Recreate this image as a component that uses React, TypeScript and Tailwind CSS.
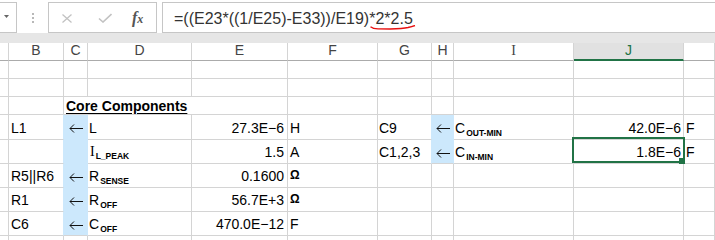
import type { ReactNode } from 'react'
import { twMerge } from 'tailwind-merge'

const COLS = 'grid grid-cols-[9px_55px_24px_104px_96px_90px_54px_22px_120px_110px_1fr]'

type Spec = { v?: ReactNode; cls?: string; wide?: boolean; sel?: boolean }

// filled cells hide their own gridlines
const FILL = 'bg-[#cce8fc] border-r-[#cce8fc] border-b-[#cce8fc]'
const FILL_END = 'bg-[#cce8fc] border-r-[#cce8fc]'
const EDGE = 'border-r-[#cce8fc]'
const NUM = 'justify-end pr-[3px]'
const ARROW = 'items-center justify-center pt-[3px] pb-0'

function Arrow() {
  return (
    <svg width="14" height="9" viewBox="0 0 14 9" fill="none" stroke="#111" strokeWidth="1">
      <path d="M1 4.5h13M5 0.5L1 4.5l4 4" />
    </svg>
  )
}

function Sub({ t, main }: { t: string; main: ReactNode }) {
  return (
    <span>
      {main}
      <sub className="-bottom-[3px] ml-[1px] text-[8.5px] font-bold">{t}</sub>
    </span>
  )
}

const SerifI = () => <span className="font-['Liberation_Serif',serif]">I</span>

function Selection() {
  return (
    <>
      <div className="pointer-events-none absolute -left-[2px] -right-[2px] -top-[3px] bottom-0 z-10 border-2 border-[#217346]" />
      <div className="absolute -bottom-[1px] -right-[2px] z-20 h-[6px] w-[6px] bg-[#217346]" />
    </>
  )
}

function Cell({ s }: { s: Spec }) {
  return (
    <div
      className={twMerge(
        'relative flex items-end whitespace-nowrap border-r border-b border-r-[#d4d4d4] border-b-[#d4d4d4] pb-[3px] text-[14px] leading-[16px] text-black',
        s.wide && 'col-span-3',
        s.cls
      )}
    >
      {s.v}
      {s.sel && <Selection />}
    </div>
  )
}

const empty = (n: number): Spec[] => Array.from({ length: n }, () => ({}))

const ROWS: { h: string; cells: Spec[] }[] = [
  { h: 'h-[18px]', cells: empty(11) },
  { h: 'h-[18px]', cells: empty(11) },
  {
    h: 'h-[18px]',
    cells: [
      {},
      {},
      {
        wide: true,
        cls: 'pl-[2px] pb-0 font-bold underline underline-offset-2',
        v: 'Core Components',
      },
      ...empty(6),
    ],
  },
  {
    h: 'h-[25px]',
    cells: [
      {},
      { v: 'L1', cls: `pl-[2px] ${EDGE}` },
      { v: <Arrow />, cls: `${FILL} ${ARROW}` },
      { v: 'L', cls: 'pl-[1px]' },
      { v: '27.3E−6', cls: NUM },
      { v: 'H', cls: 'pl-[2px]' },
      { v: 'C9', cls: `pl-[1px] ${EDGE}` },
      { v: <Arrow />, cls: `${FILL} ${ARROW}` },
      { v: <Sub main="C" t="OUT-MIN" />, cls: 'pl-[1px]' },
      { v: '42.0E−6', cls: 'justify-end pr-[2px]' },
      { v: 'F', cls: 'pl-[2px]' },
    ],
  },
  {
    h: 'h-[24px]',
    cells: [
      {},
      { cls: EDGE },
      { cls: FILL },
      { v: <Sub main={<SerifI />} t="L_PEAK" />, cls: 'pl-[2px]' },
      { v: '1.5', cls: NUM },
      { v: 'A', cls: 'pl-[2px]' },
      { v: 'C1,2,3', cls: `pl-[1px] ${EDGE}` },
      { v: <Arrow />, cls: `${FILL_END} ${ARROW}` },
      { v: <Sub main="C" t="IN-MIN" />, cls: 'pl-[1px]' },
      { v: '1.8E−6', cls: 'justify-end pr-[2px]', sel: true },
      { v: 'F', cls: 'pl-[2px]' },
    ],
  },
  {
    h: 'h-[24px]',
    cells: [
      {},
      { v: 'R5||R6', cls: `pl-[2px] ${EDGE}` },
      { v: <Arrow />, cls: `${FILL} ${ARROW}` },
      { v: <Sub main="R" t="SENSE" />, cls: 'pl-[1px]' },
      { v: '0.1600', cls: NUM },
      { v: 'Ω', cls: 'pl-[2px] text-[12px] font-bold' },
      ...empty(5),
    ],
  },
  {
    h: 'h-[24px]',
    cells: [
      {},
      { v: 'R1', cls: `pl-[2px] ${EDGE}` },
      { v: <Arrow />, cls: `${FILL} ${ARROW}` },
      { v: <Sub main="R" t="OFF" />, cls: 'pl-[1px]' },
      { v: '56.7E+3', cls: NUM },
      { v: 'Ω', cls: 'pl-[2px] text-[12px] font-bold' },
      ...empty(5),
    ],
  },
  {
    h: 'h-[24px]',
    cells: [
      {},
      { v: 'C6', cls: `pl-[2px] ${EDGE}` },
      { v: <Arrow />, cls: `${FILL_END} ${ARROW}` },
      { v: <Sub main="C" t="OFF" />, cls: 'pl-[1px]' },
      { v: '470.0E−12', cls: NUM },
      { v: 'F', cls: 'pl-[2px]' },
      ...empty(5),
    ],
  },
  { h: 'h-[24px]', cells: empty(11) },
]

const HEAD = ['', 'B', 'C', 'D', 'E', 'F', 'G', 'H', 'I', 'J', '']

function FormulaBar() {
  return (
    <div className="flex h-[33px] items-start bg-white">
      {/* name box (scrolled off) */}
      <div className="mt-[2px] flex h-[31px] w-[17px] items-center justify-center border-y border-r border-[#c6c6c6] pr-[3px] pb-[3px]">
        <svg width="5" height="3" viewBox="0 0 5 3">
          <path d="M0 0h5L2.5 3z" fill="#666" />
        </svg>
      </div>
      <div className="flex w-[31px] justify-center pt-[13px]">
        <svg width="2" height="10" viewBox="0 0 2 10" fill="#b8b8b8">
          <rect x="0" y="0" width="2" height="2" />
          <rect x="0" y="4" width="2" height="2" />
          <rect x="0" y="8" width="2" height="2" />
        </svg>
      </div>
      {/* cancel / enter / fx */}
      <div className="mt-[2px] flex h-[31px] w-[109px] items-center border border-[#c6c6c6] pt-[1px]">
        <svg className="ml-[13px]" width="10" height="9" viewBox="0 0 10 9" stroke="#c2c2c2" strokeWidth="1.3">
          <path d="M0.5 0.5L9.5 8.5M9.5 0.5L0.5 8.5" />
        </svg>
        <svg className="ml-[26px]" width="14" height="10" viewBox="0 0 14 10" fill="none" stroke="#c2c2c2" strokeWidth="1.6">
          <path d="M1 5.5L5 9L13.5 1" />
        </svg>
        <span className="ml-[20px] font-['Liberation_Serif',serif] text-[16px] font-bold italic leading-none text-[#555]">
          f<span className="text-[12px]">x</span>
        </span>
      </div>
      <div className="relative ml-[5px] mt-[2px] flex h-[31px] flex-1 items-center border-y border-l border-[#c6c6c6] pl-[11px] pt-[3px] text-[16px] leading-[20px] text-[#333]">
        =((E23*((1/E25)-E33))/E19)*2*2.5
        <svg className="absolute left-[207px] top-[22px]" width="46" height="6" viewBox="0 0 46 6" fill="none" stroke="#e81010" strokeWidth="1.4">
          <path d="M0.5 1.7Q3 3.7 8 3.9L20 4Q33 3.6 38 2.5Q42 1.5 45 0.5" />
        </svg>
      </div>
    </div>
  )
}

export default function App() {
  return (
    <div className="h-[240px] w-[715px] overflow-hidden bg-white font-['Liberation_Sans',Arial,sans-serif]">
      <FormulaBar />
      <div className="h-[10px] bg-[#e6e6e6]" />

      {/* column headers */}
      <div className={`${COLS} h-[18px]`}>
        {HEAD.map((l, i) => (
          <div
            key={i}
            className={
              l === 'J'
                ? 'flex justify-center border-r border-b-2 border-r-[#d4d4d4] border-b-[#217346] bg-[#e1e1e1] text-[14px] leading-[15px] text-[#217346]'
                : 'flex justify-center border-r border-b border-r-[#d4d4d4] border-b-[#ababab] text-[14px] leading-[15px] text-[#444]'
            }
          >
            {l === 'I' ? <SerifI /> : l}
          </div>
        ))}
      </div>

      {ROWS.map((r, i) => (
        <div key={i} className={`${COLS} ${r.h}`}>
          {r.cells.map((s, j) => (
            <Cell key={j} s={s} />
          ))}
        </div>
      ))}
    </div>
  )
}
